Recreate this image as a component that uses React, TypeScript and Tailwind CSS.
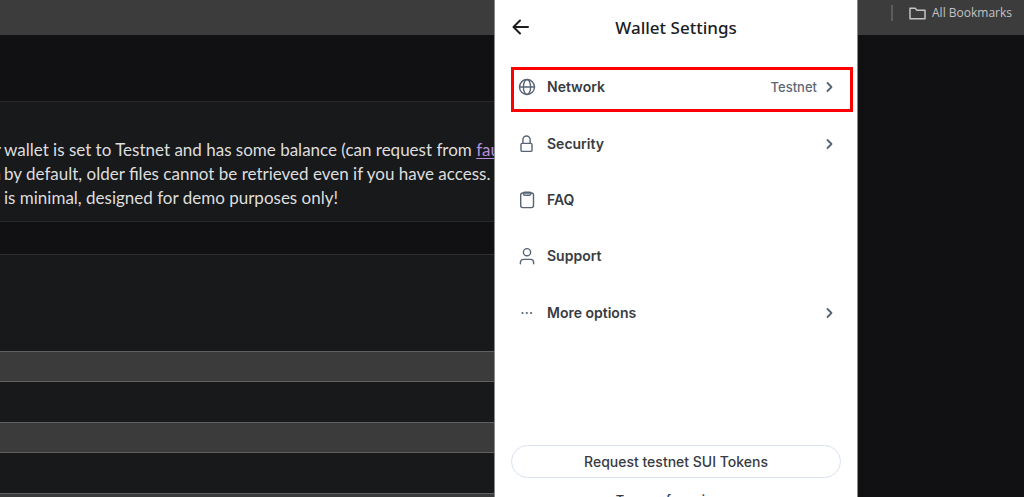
import type { ReactNode } from "react";
import { clsx } from "clsx";
import { ArrowUpRight } from "lucide-react";

const notes: { lead: string; body: ReactNode }[] = [
  {
    lead: "r",
    body: (
      <>
        wallet is set to Testnet and has some balance (can request from{" "}
        <a href="#faucet" className="text-[#b78fdc] underline underline-offset-2">
          faucet
        </a>
        )
      </>
    ),
  },
  { lead: "n", body: "by default, older files cannot be retrieved even if you have access." },
  { lead: "I", body: "is minimal, designed for demo purposes only!" },
];

const menu = [
  { label: "Network", icon: <GlobeIcon />, value: "Testnet", arrow: true },
  { label: "Security", icon: <LockIcon />, arrow: true },
  { label: "FAQ", icon: <ClipboardIcon /> },
  { label: "Support", icon: <PersonIcon /> },
  { label: "More options", icon: <DotsIcon />, arrow: true },
];

function Icon({ children }: { children: ReactNode }) {
  return (
    <svg
      className="size-[18px] shrink-0 text-[#566474]"
      viewBox="0 0 18 18"
      fill="none"
      stroke="currentColor"
      strokeWidth="1.4"
      strokeLinecap="round"
      strokeLinejoin="round"
      aria-hidden="true"
    >
      {children}
    </svg>
  );
}

function GlobeIcon() {
  return (
    <Icon>
      <circle cx="9" cy="9" r="7.5" />
      <ellipse cx="9" cy="9" rx="3.6" ry="7.5" />
      <path d="M1.5 9h15" />
    </Icon>
  );
}

function LockIcon() {
  return (
    <Icon>
      <rect x="3" y="8.4" width="11" height="8" rx="1.2" />
      <path d="M4.9 8.4V4.6a3.6 3.6 0 0 1 7.2 0v3.8" />
    </Icon>
  );
}

function ClipboardIcon() {
  return (
    <Icon>
      <rect x="2.7" y="2" width="12.8" height="14.6" rx="2" />
      <path d="M5.4 2v.8a1.4 1.4 0 0 0 1.4 1.4h4.6a1.4 1.4 0 0 0 1.4-1.4V2a.8.8 0 0 0-.8-.8H6.2a.8.8 0 0 0-.8.8Z" />
    </Icon>
  );
}

function PersonIcon() {
  return (
    <Icon>
      <circle cx="9" cy="5.2" r="3.6" />
      <path d="M2.4 16.8v-1.4a3 3 0 0 1 3-3h7.2a3 3 0 0 1 3 3v1.4" />
    </Icon>
  );
}

function DotsIcon() {
  return (
    <Icon>
      <g fill="currentColor" stroke="none">
        <circle cx="4.5" cy="9" r="1.1" />
        <circle cx="8.8" cy="9" r="1.1" />
        <circle cx="13.1" cy="9" r="1.1" />
      </g>
    </Icon>
  );
}

function WalletPopup() {
  return (
    <section className="absolute inset-y-0 right-[166px] w-[364px] overflow-hidden border-x border-[#8a8a8a] bg-white font-['Inter',sans-serif] text-[#383b3f]">
      <header className="grid h-14 grid-cols-[32px_1fr_32px] items-center px-4">
        <button type="button" aria-label="Back" className="text-[#1c1d1f]">
          <svg
            className="size-5"
            viewBox="0 0 20 20"
            fill="none"
            stroke="currentColor"
            strokeWidth="2"
            strokeLinecap="round"
            strokeLinejoin="round"
          >
            <path d="M17 9H3M9 2.5 2.5 9 9 15.5" />
          </svg>
        </button>
        <h1 className="text-center font-['Noto_Sans',sans-serif] text-[17px] font-medium text-[#1c1d1f]">
          Wallet Settings
        </h1>
      </header>

      <nav className="mt-[3px] grid h-[282px] grid-rows-5 px-4">
        {menu.map((item) => (
          <button
            key={item.label}
            type="button"
            className="relative flex items-center gap-[11px] pr-1 pl-[7px] text-[14px] leading-5"
          >
            {item.icon}
            <span className="flex-1 text-left font-semibold">{item.label}</span>
            <span className="flex items-center gap-1 text-[13px] font-medium text-[#5d6875]">
              {item.value}
              {item.arrow && (
                <svg
                  className="size-4"
                  viewBox="0 0 16 16"
                  fill="none"
                  stroke="#566474"
                  strokeWidth="1.8"
                  strokeLinecap="round"
                  strokeLinejoin="round"
                  aria-hidden="true"
                >
                  <path d="m6.5 4 4 4-4 4" />
                </svg>
              )}
            </span>
            {item.value && (
              <span className="pointer-events-none absolute top-2 -right-3 bottom-[3px] left-0 border-3 border-[#ff0000]" />
            )}
          </button>
        ))}
      </nav>

      <footer className="mt-[104px] flex flex-col items-center gap-3 px-4 leading-5">
        <button
          type="button"
          className="h-[33px] w-full rounded-full border border-[#d9e3ef] text-[14px] font-medium"
        >
          Request testnet SUI Tokens
        </button>
        <a href="#terms" className="flex items-center gap-1 text-[13px] font-medium">
          Terms of service
          <ArrowUpRight className="mt-1 size-3" />
        </a>
      </footer>
    </section>
  );
}

export default function App() {
  return (
    <div className="relative h-screen overflow-hidden bg-[#111113] font-['Lato',sans-serif]">
      <div className="flex h-[35px] items-start justify-end bg-[#3c3c3c] px-3 pt-1 font-['Open_Sans',sans-serif] text-[12px] text-[#c3c3c3]">
        <div className="flex h-[18px] items-center gap-4">
          <span className="h-4 w-0.5 bg-[#5c5c5c]" />
          <button type="button" className="flex items-center gap-1.5">
            <svg
              className="h-4 w-[17px]"
              viewBox="0 0 17 16"
              fill="none"
              stroke="currentColor"
              strokeWidth="1.5"
              strokeLinejoin="round"
              aria-hidden="true"
            >
              <path d="M1 3.2h5.2l1.8 2h8v8.6H1Z" />
            </svg>
            All Bookmarks
          </button>
        </div>
      </div>

      <main className="w-3/5 pt-[66px] text-[#dedede]">
        <section className="h-[121px] overflow-hidden border-y border-[#26282b] bg-[#18191b] pt-9">
          <ul className="text-[17px] leading-6 whitespace-nowrap">
            {notes.map((note) => (
              <li key={note.lead} className="flex gap-[3px]">
                <span className="flex w-px justify-end">{note.lead}</span>
                <span>{note.body}</span>
              </li>
            ))}
          </ul>
        </section>

        <section className="mt-8 flex flex-col gap-10 border-t border-[#2c2e31] bg-[#18191b] pt-24">
          {["Name", "Address", "Amount"].map((field, i) => (
            <input
              key={field}
              aria-label={field}
              className={clsx("h-[31px] w-full border-y border-[#606060] bg-[#3b3b3b] px-2", i === 2 && "mb-10")}
            />
          ))}
        </section>
      </main>

      <WalletPopup />
    </div>
  );
}
